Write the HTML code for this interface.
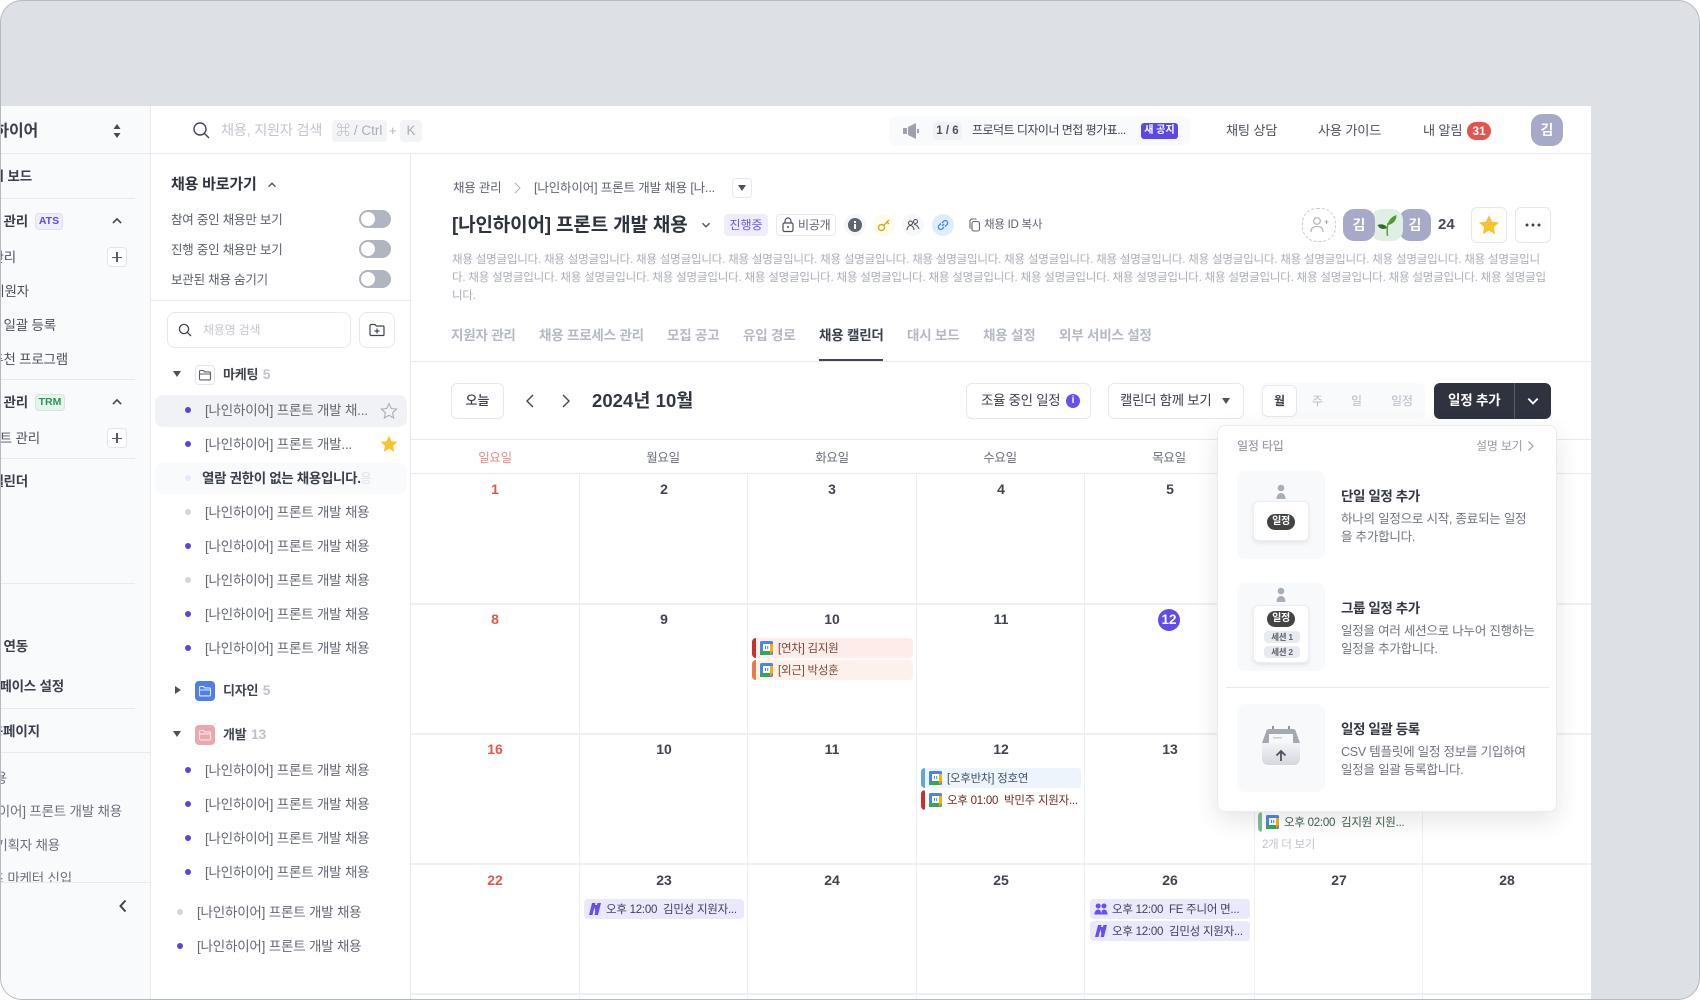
<!DOCTYPE html>
<html lang="ko"><head><meta charset="utf-8"><title>채용 캘린더</title>
<style>
*{box-sizing:border-box}
html,body{margin:0;padding:0;width:1700px;height:1000px;overflow:hidden;background:#fff}
body{font-family:"Liberation Sans","Noto Sans CJK KR",sans-serif;color:#3a3f4b}
#frame{position:absolute;left:0;top:0;width:1700px;height:1000px;background:#dde0e5;border:1px solid #b5b9c2;border-radius:22px;overflow:hidden}
#app{position:absolute;left:-1px;top:105px;width:1591px;height:895px;background:#fff;overflow:hidden}
.a{position:absolute}
.t{position:absolute;white-space:nowrap;line-height:20px;height:20px;letter-spacing:-.2px}
.b{font-weight:700}
.ln{position:absolute;background:#e8eaee}
#side{position:absolute;left:0;top:0;width:151px;height:895px;background:#f9fafc;border-right:1px solid #e8eaee;overflow:hidden;font-size:13.5px;color:#4c515c}
#side .b{color:#3a3f4b}
.plus{position:absolute;left:107px;width:20px;height:20px;background:#fff;border:1px solid #e3e5ea;border-radius:4px}
.plus:before{content:"";position:absolute;left:4px;top:8.5px;width:10px;height:1.5px;background:#565b66}
.plus:after{content:"";position:absolute;left:8.2px;top:4px;width:1.5px;height:10px;background:#565b66}
.badge{position:absolute;font-size:10.5px;font-weight:700;line-height:15px;height:17px;border-radius:4px;text-align:center;border:1px solid}
.tg{position:absolute;left:359px;width:32px;height:18px;border-radius:9px;background:#b1b5c1}
.tg:after{content:"";position:absolute;left:2px;top:2px;width:14px;height:14px;border-radius:50%;background:#fff}
.d{position:absolute;width:6px;height:6px;border-radius:50%;background:#5b42e6}
.g{background:#d3d5da}
.r{font-size:13.5px;color:#636873}
.cnt{color:#bfc3cb;font-size:14px;margin-left:1px}
.kb{position:absolute;background:#f3f4f6;border-radius:4px;height:22px;line-height:22px;font-size:13.5px;color:#a9adb7;text-align:center}
.btn{position:absolute;background:#fff;border:1px solid #e6e8ec;border-radius:6px}
.tab{font-size:13.5px;font-weight:700;color:#b5b9c3;top:220px}
.desc{position:absolute;left:452px;font-size:11.5px;line-height:18px;color:#aaaeb8;white-space:nowrap;letter-spacing:-.2px}
.wd{position:absolute;top:343px;width:60px;text-align:center;font-size:12.5px;color:#6b707b;line-height:20px;letter-spacing:-.3px}
.n{position:absolute;width:40px;text-align:center;font-size:14px;font-weight:700;line-height:20px;color:#3f444f}
.sun{color:#e0574f}
.ev{position:absolute;height:20px;border-radius:4px;font-size:11.5px;line-height:20px;white-space:nowrap;letter-spacing:-.25px;overflow:hidden}
.bar{position:absolute;left:0;top:0;width:4px;height:20px;border-radius:3px 0 0 3px}
.ev svg{position:absolute;left:8px;top:3px}
.ev span{position:absolute;left:26px;top:1px}
#pop{position:absolute;left:1217px;top:320px;width:340px;height:387px;background:#fff;border:1px solid #eaecef;border-radius:8px;box-shadow:0 8px 24px rgba(40,45,60,.12)}
#pin{position:absolute;left:1px;top:0;width:339px;height:386px}
.card{position:absolute;left:18px;width:88px;height:88px;background:#f8f9fb;border-radius:8px}
.wc{position:absolute;left:16px;width:56px;background:#fff;border:1px solid #eceef1;border-radius:6px;box-shadow:0 2px 5px rgba(40,45,60,.1)}
.chip{position:absolute;background:#444;color:#fff;font-size:10px;font-weight:700;border-radius:8px;height:16px;line-height:16px;width:28px;text-align:center;letter-spacing:-.3px}
.ses{position:absolute;background:#e9eaef;color:#5c616c;font-size:8.5px;font-weight:700;border-radius:4px;height:12px;line-height:12px;width:36px;left:10px;text-align:center;letter-spacing:-.3px}
.pt{position:absolute;left:122px;font-size:13.5px;font-weight:700;color:#333742;line-height:20px;white-space:nowrap;letter-spacing:-.4px}
.pd{position:absolute;left:122px;font-size:12.5px;color:#6f747f;line-height:18px;white-space:nowrap;letter-spacing:-.22px}
</style></head><body>
<svg width="0" height="0" style="position:absolute"><defs>
<symbol id="gc" viewBox="0 0 13 14"><rect x="0" y="0" width="13" height="14" rx="1.5" fill="#4a86e8"/><rect x="0" y="10" width="10" height="4" fill="#34a853"/><rect x="10" y="3" width="3" height="7" fill="#f4b400"/><path d="M10 10h3l-3 4z" fill="#e8a30a"/><rect x="3" y="3" width="7" height="7" fill="#fff"/><rect x="5" y="5" width="1" height="3" fill="#4a86e8"/><rect x="7.2" y="5" width="1" height="3" fill="#4a86e8"/></symbol>
<symbol id="st" viewBox="0 0 20 20"><path d="M10 1.8l2.5 5.4 5.9.7-4.4 4 1.2 5.8-5.2-2.9-5.2 2.9 1.2-5.8-4.4-4 5.9-.7z"/></symbol>
<symbol id="nn" viewBox="0 0 14 14"><path d="M4 1h3.5L4.500 13H1zM9.500 1H13l-3 12H6.500zM6 3h3l-1.500 8z" fill="#6a4ff0"/></symbol>
<symbol id="ppl" viewBox="0 0 14 14"><circle cx="4.2" cy="4" r="2.5" fill="#6a4ff0"/><circle cx="10" cy="4" r="2.5" fill="#6a4ff0"/><path d="M.5 12.5c0-3 1.5-5 3.7-5s3 2 3 5zM7.2 12.5c0-3 .8-5 2.8-5s3.6 2 3.6 5z" fill="#6a4ff0"/></symbol>
<symbol id="fol" viewBox="0 0 14 14"><path d="M1.5 3.500a1 1 0 0 1 1-1h3l1 1.400h5a1 1 0 0 1 1 1v6a1 1 0 0 1-1 1h-9a1 1 0 0 1-1-1zM1.500 6h11" fill="none" stroke="currentColor" stroke-width="1.100"/></symbol>
<symbol id="chev" viewBox="0 0 12 12"><path d="M2.500 7.800L6 4.200l3.500 3.600" fill="none" stroke="currentColor" stroke-width="1.400"/></symbol>
</defs></svg>
<div id="frame"><div id="app">

<!-- sidebar -->
<div id="side">
<div class="ln" style="left:0;top:47px;width:150px;height:1px"></div>
<div class="t b" style="right:112px;top:16px;font-size:16px">나인하이어</div>
<svg class="a" style="left:112px;top:15px" width="10" height="20"><path d="M5 3L8.500 8h-7zM5 17l3.500-5h-7z" fill="#444954"/></svg>
<div class="t b" style="right:118px;top:61px">대시 보드</div>
<div class="ln" style="left:0;top:92px;width:135px;height:1px"></div>
<div class="t b" style="right:122px;top:106px">채용 관리</div>
<div class="badge" style="left:35px;top:107px;width:28px;background:#efeefe;border-color:#dfdcfb;color:#5f4de6">ATS</div>
<svg class="a" style="left:110px;top:108px;color:#454a55" width="14" height="14"><use href="#chev"/></svg>
<div class="t" style="right:134px;top:142px">채용 관리</div><div class="plus" style="top:141px"></div>
<div class="t" style="right:121px;top:176px">채용 지원자</div>
<div class="t" style="right:94px;top:210px">지원자 일괄 등록</div>
<div class="t" style="right:82px;top:244px">사내 추천 프로그램</div>
<div class="ln" style="left:0;top:273px;width:135px;height:1px"></div>
<div class="t b" style="right:122px;top:287px">인재 관리</div>
<div class="badge" style="left:35px;top:288px;width:30px;background:#e6f5ec;border-color:#cfe9d9;color:#2f9160">TRM</div>
<svg class="a" style="left:110px;top:289px;color:#454a55" width="14" height="14"><use href="#chev"/></svg>
<div class="t" style="right:110px;top:323px">리스트 관리</div><div class="plus" style="top:322px"></div>
<div class="ln" style="left:0;top:352px;width:135px;height:1px"></div>
<div class="t b" style="right:122px;top:366px">채용 캘린더</div>
<div class="ln" style="left:0;top:477px;width:135px;height:1px"></div>
<div class="t b" style="right:122px;top:531px">외부 연동</div>
<div class="t b" style="right:86px;top:571px">워크스페이스 설정</div>
<div class="ln" style="left:0;top:602px;width:135px;height:1px"></div>
<div class="t b" style="right:110px;top:616px;letter-spacing:-.1px">채용페이지</div>
<div class="ln" style="left:0;top:646px;width:150px;height:1px"></div>
<div class="a" style="left:0;top:647px;width:150px;height:129px;overflow:hidden">
<div class="t" style="right:143px;top:16px;color:#6b707b">최근 채용</div>
<div class="t" style="right:28px;top:49px;color:#6b707b">[나인하이어] 프론트 개발 채용</div>
<div class="t" style="right:90px;top:83px;color:#6b707b">서비스 기획자 채용</div>
<div class="t" style="right:78px;top:116px;color:#6b707b">콘텐츠 마케터 신입</div>
</div>
<div class="ln" style="left:0;top:776px;width:150px;height:1px"></div>
<svg class="a" style="left:117px;top:792px" width="12" height="16"><path d="M8.500 2.500L3.500 8l5 5.500" fill="none" stroke="#3f444f" stroke-width="2"/></svg>
</div>

<!-- shortcuts panel -->
<div class="a" style="left:151px;top:47px;width:260px;height:848px;background:#fff;border-right:1px solid #e8eaee"></div>
<div class="ln" style="left:151px;top:47px;width:1441px;height:1px"></div>
<div class="t b" style="left:171px;top:69px;font-size:15px;color:#30343e">채용 바로가기</div>
<svg class="a" style="left:266px;top:73px;color:#50555f" width="12" height="12"><use href="#chev"/></svg>
<div class="t" style="left:171px;top:104px;font-size:12.5px;color:#5a5f6a">참여 중인 채용만 보기</div><div class="tg" style="top:104px"></div>
<div class="t" style="left:171px;top:134px;font-size:12.5px;color:#5a5f6a">진행 중인 채용만 보기</div><div class="tg" style="top:134px"></div>
<div class="t" style="left:171px;top:164px;font-size:12.5px;color:#5a5f6a">보관된 채용 숨기기</div><div class="tg" style="top:164px"></div>
<div class="ln" style="left:151px;top:194px;width:259px;height:1px"></div>
<div class="btn" style="left:167px;top:206px;width:184px;height:36px;border-radius:8px"></div>
<svg class="a" style="left:178px;top:217px" width="14" height="14"><circle cx="6" cy="6" r="4.600" fill="none" stroke="#3f444f" stroke-width="1.300"/><path d="M9.400 9.400L13 13" stroke="#3f444f" stroke-width="1.300"/></svg>
<div class="t" style="left:203px;top:214px;font-size:12px;color:#c5c8d0">채용명 검색</div>
<div class="btn" style="left:359px;top:206px;width:36px;height:36px;border-radius:8px"></div>
<svg class="a" style="left:369px;top:216px" width="16" height="16"><path d="M1 3.500a1 1 0 0 1 1-1h4l1.300 1.500H14a1 1 0 0 1 1 1v7.500a1 1 0 0 1-1 1H2a1 1 0 0 1-1-1zM8 6.500v5M5.500 9h5" fill="none" stroke="#3f444f" stroke-width="1.200"/></svg>

<svg class="a" style="left:173px;top:265px" width="8" height="6"><path d="M0 0h8L4 6z" fill="#4c515c"/></svg>
<div class="a" style="left:195px;top:259px;width:20px;height:20px;border:1px solid #e3e5ea;border-radius:4px;color:#5c616c"><svg class="a" style="left:2px;top:2px" width="14" height="14"><use href="#fol"/></svg></div>
<div class="t b" style="left:223px;top:258px;font-size:13px;color:#3f444f">마케팅 <span class="cnt">5</span></div>
<div class="a" style="left:155px;top:289px;width:252px;height:32px;background:#f1f2f5;border-radius:8px"></div>
<div class="d" style="left:185px;top:301px"></div><div class="t r" style="left:205px;top:295px">[나인하이어] 프론트 개발 채...</div>
<svg class="a" style="left:380px;top:296px;fill:none;stroke:#a9adb7;stroke-width:1.200" width="18" height="18"><use href="#st"/></svg>
<div class="d" style="left:185px;top:335px"></div><div class="t r" style="left:205px;top:329px">[나인하이어] 프론트 개발...</div>
<svg class="a" style="left:379px;top:328px;fill:#f7c32f" width="20" height="20"><use href="#st"/></svg>
<div class="a" style="left:155px;top:357px;width:252px;height:31px;background:#f9fafb;border-radius:8px"></div>
<div class="d" style="left:185px;top:369px;background:#e9e8f8"></div>
<div class="t" style="left:360px;top:363px;font-size:13px;color:#e3e4e8">용</div>
<div class="t b" style="left:202px;top:363px;font-size:13.5px;letter-spacing:-.34px;color:#3a3f4b">열람 권한이 없는 채용입니다.</div>
<div class="d g" style="left:185px;top:403px"></div><div class="t r" style="left:205px;top:397px">[나인하이어] 프론트 개발 채용</div>
<div class="d" style="left:185px;top:437px"></div><div class="t r" style="left:205px;top:431px">[나인하이어] 프론트 개발 채용</div>
<div class="d g" style="left:185px;top:471px"></div><div class="t r" style="left:205px;top:465px">[나인하이어] 프론트 개발 채용</div>
<div class="d" style="left:185px;top:505px"></div><div class="t r" style="left:205px;top:499px">[나인하이어] 프론트 개발 채용</div>
<div class="d" style="left:185px;top:539px"></div><div class="t r" style="left:205px;top:533px">[나인하이어] 프론트 개발 채용</div>
<svg class="a" style="left:175px;top:580px" width="6" height="8"><path d="M0 0v8l6-4z" fill="#4c515c"/></svg>
<div class="a" style="left:195px;top:575px;width:20px;height:20px;background:#4f7fe6;border-radius:4px;color:#dfe8fb"><svg class="a" style="left:3px;top:3px" width="14" height="14"><use href="#fol"/></svg></div>
<div class="t b" style="left:223px;top:574px;font-size:13px;color:#3f444f">디자인 <span class="cnt">5</span></div>
<svg class="a" style="left:173px;top:625px" width="8" height="6"><path d="M0 0h8L4 6z" fill="#4c515c"/></svg>
<div class="a" style="left:195px;top:619px;width:20px;height:20px;background:#eba7ae;border-radius:4px;color:#fbe7e9"><svg class="a" style="left:3px;top:3px" width="14" height="14"><use href="#fol"/></svg></div>
<div class="t b" style="left:223px;top:618px;font-size:13px;color:#3f444f">개발 <span class="cnt">13</span></div>
<div class="d" style="left:185px;top:661px"></div><div class="t r" style="left:205px;top:655px">[나인하이어] 프론트 개발 채용</div>
<div class="d" style="left:185px;top:695px"></div><div class="t r" style="left:205px;top:689px">[나인하이어] 프론트 개발 채용</div>
<div class="d" style="left:185px;top:729px"></div><div class="t r" style="left:205px;top:723px">[나인하이어] 프론트 개발 채용</div>
<div class="d" style="left:185px;top:763px"></div><div class="t r" style="left:205px;top:757px">[나인하이어] 프론트 개발 채용</div>
<div class="d g" style="left:177px;top:803px"></div><div class="t r" style="left:197px;top:797px">[나인하이어] 프론트 개발 채용</div>
<div class="d" style="left:177px;top:837px"></div><div class="t r" style="left:197px;top:831px">[나인하이어] 프론트 개발 채용</div>

<!-- top bar -->
<svg class="a" style="left:192px;top:15px" width="18" height="18"><circle cx="8" cy="8" r="6" fill="none" stroke="#3f444f" stroke-width="1.400"/><path d="M12.500 12.500L17 17" stroke="#3f444f" stroke-width="1.400"/></svg>
<div class="t" style="left:221px;top:15px;font-size:14.2px;color:#c3c6ce">채용, 지원자 검색</div>
<div class="kb" style="left:332px;top:14px;width:55px">⌘ / Ctrl</div>
<div class="t" style="left:389px;top:15px;font-size:13px;color:#b0b4bd">+</div>
<div class="kb" style="left:400px;top:14px;width:22px">K</div>
<div class="a" style="left:889px;top:10px;width:301px;height:30px;background:#f9fafc;border-radius:8px"></div>
<svg class="a" style="left:903px;top:15px" width="18" height="20"><path d="M0 7h4v6H0zM5 6l8-4v16l-8-4z" fill="#9da1ab"/><rect x="14" y="8" width="2" height="4" fill="#9da1ab"/></svg>
<div class="a" style="left:933px;top:16px;width:29px;height:18px;background:#f1f2f5;border-radius:4px;font-size:11.5px;font-weight:700;line-height:18px;text-align:center;color:#4c515c">1 / 6</div>
<div class="t" style="left:972px;top:14px;font-size:12px;color:#3f444f;letter-spacing:-.52px">프로덕트 디자이너 면접 평가표...</div>
<div class="a" style="left:1141px;top:17px;width:37px;height:16px;background:#5b47ea;border-radius:3px;font-size:10px;font-weight:700;line-height:16px;text-align:center;color:#fff">새 공지</div>
<div class="t" style="left:1226px;top:15px;font-size:13.2px;color:#4c515c">채팅 상담</div>
<div class="t" style="left:1318px;top:15px;font-size:13.2px;color:#4c515c">사용 가이드</div>
<div class="t" style="left:1423px;top:15px;font-size:13.2px;color:#4c515c">내 알림</div>
<div class="a" style="left:1467px;top:16px;width:24px;height:18px;background:#e5534b;border-radius:9px;font-size:12px;font-weight:700;line-height:18px;text-align:center;color:#fff">31</div>
<div class="a" style="left:1531px;top:8px;width:32px;height:32px;background:#a6a9c8;border-radius:11px;font-size:14px;font-weight:700;line-height:32px;text-align:center;color:#fff">김</div>

<!-- heading -->
<div class="t" style="left:453px;top:72px;font-size:12.5px;color:#5f646f">채용 관리</div>
<svg class="a" style="left:513px;top:76px" width="10" height="12"><path d="M2 1l5 5-5 5" fill="none" stroke="#a9adb7" stroke-width="1"/></svg>
<div class="t" style="left:534px;top:72px;font-size:12.5px;letter-spacing:-.14px;color:#5f646f">[나인하이어] 프론트 개발 채용 [나...</div>
<div class="btn" style="left:732px;top:72px;width:20px;height:20px;border-radius:4px"></div>
<svg class="a" style="left:738px;top:79px" width="8" height="6"><path d="M0 0h8L4 6z" fill="#4c515c"/></svg>
<div class="t b" style="left:452px;top:110px;font-size:19px;color:#2f333d;letter-spacing:-.16px">[나인하이어] 프론트 개발 채용</div>
<svg class="a" style="left:700px;top:113px;transform:rotate(180deg);color:#50555f" width="12" height="12"><use href="#chev"/></svg>
<div class="a" style="left:724px;top:108px;width:44px;height:22px;background:#efedfd;border-radius:4px;font-size:12px;line-height:22px;text-align:center;color:#6a5ae8">진행중</div>
<div class="btn" style="left:776px;top:108px;width:60px;height:22px;border-radius:4px"></div>
<svg class="a" style="left:782px;top:111px" width="12" height="16"><path d="M3 6V4a3 3 0 0 1 6 0v2" fill="none" stroke="#4c515c" stroke-width="1.200"/><rect x="1" y="6" width="10" height="8.500" rx="1.500" fill="none" stroke="#4c515c" stroke-width="1.200"/><circle cx="6" cy="10" r="1" fill="#4c515c"/></svg>
<div class="t" style="left:798px;top:109px;font-size:12px;color:#5f646f">비공개</div>
<div class="a" style="left:844px;top:108px;width:22px;height:22px;border-radius:50%;background:#f5f6f8"></div>
<svg class="a" style="left:848px;top:112px" width="14" height="14"><circle cx="7" cy="7" r="7" fill="#60656f"/><rect x="6" y="6" width="2" height="5" fill="#fff"/><rect x="6" y="3" width="2" height="2" fill="#fff"/></svg>
<div class="a" style="left:873px;top:108px;width:22px;height:22px;border-radius:50%;background:#fdfbea"></div>
<svg class="a" style="left:877px;top:112px" width="14" height="14"><circle cx="4.500" cy="9.500" r="3" fill="none" stroke="#d4a62f" stroke-width="1.400"/><path d="M6.800 7.200L12 2M10 4l2 2" fill="none" stroke="#d4a62f" stroke-width="1.400"/></svg>
<div class="a" style="left:902px;top:108px;width:22px;height:22px;border-radius:50%;background:#f6f7f9"></div>
<svg class="a" style="left:906px;top:112px" width="14" height="14"><circle cx="4.500" cy="5" r="2" fill="none" stroke="#4c515c" stroke-width="1.100"/><circle cx="9.500" cy="3.500" r="2" fill="none" stroke="#4c515c" stroke-width="1.100"/><path d="M1 12c.5-3 2-4.500 3.500-4.500S7.500 9 8 12M8 6.500c2 0 4 1.500 5 4.500" fill="none" stroke="#4c515c" stroke-width="1.100"/></svg>
<div class="a" style="left:932px;top:108px;width:22px;height:22px;border-radius:50%;background:#dfedfb"></div>
<svg class="a" style="left:936px;top:112px" width="14" height="14"><path d="M6 8l2-2M5 5.500L3 7.500a2.300 2.300 0 0 0 3.300 3.300l1.700-1.800M9 8.500l2-2A2.300 2.300 0 0 0 7.700 3.200L6 5" fill="none" stroke="#3d8ae0" stroke-width="1.300"/></svg>
<svg class="a" style="left:968px;top:112px" width="13" height="14"><rect x="4" y="3.500" width="7.500" height="9.500" rx="2" fill="none" stroke="#5f646f" stroke-width="1.100"/><path d="M2 10.500V3a2 2 0 0 1 2-2h4.500" fill="none" stroke="#5f646f" stroke-width="1.100"/></svg>
<div class="t" style="left:984px;top:109px;font-size:11.5px;color:#5f646f;letter-spacing:-.25px">채용 ID 복사</div>

<div class="a" style="left:1302px;top:102px;width:34px;height:34px;border:1px dashed #c9ccd3;border-radius:15px"></div>
<svg class="a" style="left:1310px;top:110px" width="20" height="18"><circle cx="7" cy="5" r="3.300" fill="none" stroke="#a9adb7" stroke-width="1.100"/><path d="M1 16c0-4 2.500-5.500 6-5.500s6 1.500 6 5.500M14.500 6h4M16.500 4v4" fill="none" stroke="#a9adb7" stroke-width="1.100"/></svg>
<div class="a" style="left:1399px;top:103px;width:32px;height:32px;background:#a6a9c8;border-radius:11px;font-size:14px;font-weight:700;line-height:32px;text-align:center;color:#fff">김</div>
<div class="a" style="left:1371px;top:103px;width:32px;height:32px;background:#dfefe3;border-radius:11px"></div>
<svg class="a" style="left:1375px;top:107px" width="24" height="24"><path d="M12.500 23c-.5-5-.5-9 .5-13" fill="none" stroke="#5fa13c" stroke-width="1.500"/><path d="M12.500 12C14 6 17 3.500 21.500 2c0 5-3 9.500-9 10z" fill="#4f9a36"/><path d="M12 15C10.500 11.500 7 10.500 2.500 12c2 4 5.500 5 9.500 3z" fill="#2f6b2a"/></svg>
<div class="a" style="left:1343px;top:103px;width:32px;height:32px;background:#a6a9c8;border-radius:11px;font-size:14px;font-weight:700;line-height:32px;text-align:center;color:#fff">김</div>
<div class="t b" style="left:1438px;top:109px;font-size:15px;color:#444954;letter-spacing:0">24</div>
<div class="btn" style="left:1471px;top:101px;width:36px;height:36px"></div>
<svg class="a" style="left:1477px;top:107px;fill:#f7c32f" width="24" height="24"><use href="#st"/></svg>
<div class="btn" style="left:1515px;top:101px;width:36px;height:36px"></div>
<svg class="a" style="left:1524px;top:116px" width="18" height="6"><circle cx="3" cy="3" r="1.500" fill="#3f444f"/><circle cx="9" cy="3" r="1.500" fill="#3f444f"/><circle cx="15" cy="3" r="1.500" fill="#3f444f"/></svg>

<div class="desc" style="top:145px">채용 설명글입니다. 채용 설명글입니다. 채용 설명글입니다. 채용 설명글입니다. 채용 설명글입니다. 채용 설명글입니다. 채용 설명글입니다. 채용 설명글입니다. 채용 설명글입니다. 채용 설명글입니다. 채용 설명글입니다. 채용 설명글입니</div>
<div class="desc" style="top:163px">다. 채용 설명글입니다. 채용 설명글입니다. 채용 설명글입니다. 채용 설명글입니다. 채용 설명글입니다. 채용 설명글입니다. 채용 설명글입니다. 채용 설명글입니다. 채용 설명글입니다. 채용 설명글입니다. 채용 설명글입니다. 채용 설명글입</div>
<div class="desc" style="top:181px">니다.</div>

<div class="t tab" style="left:451px">지원자 관리</div>
<div class="t tab" style="left:539px">채용 프로세스 관리</div>
<div class="t tab" style="left:667px">모집 공고</div>
<div class="t tab" style="left:743px">유입 경로</div>
<div class="t tab" style="left:819px;color:#3a3f4b">채용 캘린더</div>
<div class="t tab" style="left:907px">대시 보드</div>
<div class="t tab" style="left:983px">채용 설정</div>
<div class="t tab" style="left:1059px">외부 서비스 설정</div>
<div class="ln" style="left:411px;top:255px;width:1181px;height:1px"></div>
<div class="a" style="left:819px;top:253px;width:64px;height:2px;background:#3f4450"></div>

<div class="a" style="left:0;top:-1px;width:1591px;height:896px">
<!-- toolbar -->
<div class="btn" style="left:451px;top:278px;width:53px;height:36px;font-size:13px;line-height:34px;text-align:center;font-weight:500;color:#3a3f4b">오늘</div>
<svg class="a" style="left:524px;top:288px" width="12" height="16"><path d="M9 2L3 8l6 6" fill="none" stroke="#3f444f" stroke-width="1.400"/></svg>
<svg class="a" style="left:560px;top:288px" width="12" height="16"><path d="M3 2l6 6-6 6" fill="none" stroke="#3f444f" stroke-width="1.400"/></svg>
<div class="t b" style="left:592px;top:285px;font-size:18.5px;color:#333742;line-height:22px;height:22px;letter-spacing:.05px">2024년 10월</div>
<div class="btn" style="left:966px;top:278px;width:125px;height:36px"></div>
<div class="t" style="left:981px;top:286px;font-size:13.4px;letter-spacing:-.25px;color:#3a3f4b">조율 중인 일정</div>
<div class="a" style="left:1066px;top:289px;width:14px;height:14px;border-radius:50%;background:#6a4ff0;color:#fff;font-size:10px;font-weight:700;line-height:14px;text-align:center">i</div>
<div class="btn" style="left:1108px;top:278px;width:136px;height:36px"></div>
<div class="t" style="left:1120px;top:286px;font-size:13.4px;letter-spacing:-.25px;color:#3a3f4b">캘린더 함께 보기</div>
<svg class="a" style="left:1222px;top:293px" width="8" height="6"><path d="M0 0h8L4 6z" fill="#4c515c"/></svg>
<div class="a" style="left:1260px;top:278px;width:165px;height:36px;background:#f9fafc;border-radius:6px"></div>
<div class="btn" style="left:1262px;top:280px;width:35px;height:32px;font-size:12px;font-weight:700;line-height:30px;text-align:center;color:#3a3f4b">월</div>
<div class="t" style="left:1312px;top:286px;font-size:12px;color:#b5b9c3">주</div>
<div class="t" style="left:1351px;top:286px;font-size:12px;color:#b5b9c3">일</div>
<div class="t" style="left:1391px;top:286px;font-size:12px;color:#b5b9c3">일정</div>
<div class="a" style="left:1434px;top:278px;width:117px;height:36px;background:#2f3340;border-radius:6px"></div>
<div class="a" style="left:1514px;top:278px;width:1px;height:36px;background:#5a5e69"></div>
<div class="t b" style="left:1448px;top:286px;font-size:13.5px;color:#fff">일정 추가</div>
<svg class="a" style="left:1525px;top:288px;transform:rotate(180deg);color:#fff" width="16" height="16"><use href="#chev"/></svg>

<!-- calendar grid -->
<div class="ln" style="left:411px;top:334px;width:1181px;height:1px"></div>
<div class="ln" style="left:411px;top:368px;width:1181px;height:1px"></div>
<div class="ln" style="left:411px;top:498px;width:1181px;height:2px;background:#eef0f3"></div>
<div class="ln" style="left:411px;top:628px;width:1181px;height:2px;background:#eef0f3"></div>
<div class="ln" style="left:411px;top:758px;width:1181px;height:2px;background:#eef0f3"></div>
<div class="ln" style="left:411px;top:888px;width:1181px;height:2px;background:#eef0f3"></div>
<div class="ln" style="left:579px;top:368px;width:1px;height:528px;background:#edeff2"></div>
<div class="ln" style="left:747px;top:368px;width:1px;height:528px;background:#edeff2"></div>
<div class="ln" style="left:916px;top:368px;width:1px;height:528px;background:#edeff2"></div>
<div class="ln" style="left:1084px;top:368px;width:1px;height:528px;background:#edeff2"></div>
<div class="ln" style="left:1254px;top:368px;width:1px;height:528px;background:#edeff2"></div>
<div class="ln" style="left:1422px;top:368px;width:1px;height:528px;background:#edeff2"></div>

<div class="wd" style="left:465px;color:#ec8b84">일요일</div>
<div class="wd" style="left:633px">월요일</div>
<div class="wd" style="left:802px">화요일</div>
<div class="wd" style="left:970px">수요일</div>
<div class="wd" style="left:1139px">목요일</div>

<div class="n sun" style="left:475px;top:374px">1</div><div class="n" style="left:644px;top:374px">2</div><div class="n" style="left:812px;top:374px">3</div><div class="n" style="left:981px;top:374px">4</div><div class="n" style="left:1150px;top:374px">5</div>
<div class="n sun" style="left:475px;top:504px">8</div><div class="n" style="left:644px;top:504px">9</div><div class="n" style="left:812px;top:504px">10</div><div class="n" style="left:981px;top:504px">11</div>
<div class="a" style="left:1158px;top:504px;width:22px;height:22px;border-radius:50%;background:#5f4bf0;color:#fff;font-size:13.5px;font-weight:700;line-height:22px;text-align:center">12</div>
<div class="n sun" style="left:475px;top:634px">16</div><div class="n" style="left:644px;top:634px">10</div><div class="n" style="left:812px;top:634px">11</div><div class="n" style="left:981px;top:634px">12</div><div class="n" style="left:1150px;top:634px">13</div>
<div class="n sun" style="left:475px;top:765px">22</div><div class="n" style="left:644px;top:765px">23</div><div class="n" style="left:812px;top:765px">24</div><div class="n" style="left:981px;top:765px">25</div><div class="n" style="left:1150px;top:765px">26</div><div class="n" style="left:1319px;top:765px">27</div><div class="n" style="left:1487px;top:765px">28</div>

<div class="ev" style="left:752px;top:533px;width:161px;background:#fdecea;color:#7a4540"><i class="bar" style="background:#c9302c"></i><svg width="13" height="14"><use href="#gc"/></svg><span>[연차] 김지원</span></div>
<div class="ev" style="left:752px;top:555px;width:161px;background:#fdf1ec;color:#7a4d3a"><i class="bar" style="background:#e67c47"></i><svg width="13" height="14"><use href="#gc"/></svg><span>[외근] 박성훈</span></div>
<div class="ev" style="left:921px;top:663px;width:160px;background:#edf4fb;color:#3f5266"><i class="bar" style="background:#6aa3d8"></i><svg width="13" height="14"><use href="#gc"/></svg><span>[오후반차] 정호연</span></div>
<div class="ev" style="left:921px;top:685px;width:160px;color:#6e2a25"><i class="bar" style="background:#c9302c;border-radius:2px"></i><svg width="13" height="14"><use href="#gc"/></svg><span>오후 01:00&nbsp; 박민주 지원자...</span></div>

<div class="ev" style="left:584px;top:794px;width:160px;background:#e9e8fd;color:#3f3f58"><svg style="left:4px" width="14" height="14"><use href="#nn"/></svg><span style="left:22px">오후 12:00&nbsp; 김민성 지원자...</span></div>
<div class="ev" style="left:1090px;top:794px;width:160px;background:#e9e8fd;color:#3f3f58"><svg style="left:4px" width="14" height="14"><use href="#ppl"/></svg><span style="left:22px">오후 12:00&nbsp; FE 주니어 면...</span></div>
<div class="ev" style="left:1090px;top:816px;width:160px;background:#e9e8fd;color:#3f3f58"><svg style="left:4px" width="14" height="14"><use href="#nn"/></svg><span style="left:22px">오후 12:00&nbsp; 김민성 지원자...</span></div>
<div class="ev" style="left:1258px;top:707px;width:160px;color:#3e5f48"><i class="bar" style="background:#7fbf8e;border-radius:2px"></i><svg width="13" height="14"><use href="#gc"/></svg><span>오후 02:00&nbsp; 김지원 지원...</span></div>
<div class="t" style="left:1262px;top:730px;font-size:11.5px;color:#c0c3ca;letter-spacing:-.3px">2개 더 보기</div>

<!-- popover -->
<div id="pop"><div id="pin">
<div class="t" style="left:18px;top:10px;font-size:12px;font-weight:500;color:#989da7">일정 타입</div>
<div class="t" style="left:257px;top:10px;font-size:12px;color:#989da7">설명 보기</div>
<svg class="a" style="left:307px;top:14px" width="10" height="12"><path d="M2.500 1.500l4.500 4.500-4.500 4.500" fill="none" stroke="#989da7" stroke-width="1.200"/></svg>

<div class="card" style="top:45px">
<svg class="a" style="left:37px;top:13px" width="14" height="16"><circle cx="7" cy="4" r="3.300" fill="#a9adba"/><path d="M2.500 15c0-4 2-6 4.500-6s4.500 2 4.500 6z" fill="#a9adba"/></svg>
<div class="wc" style="top:30px;height:40px"></div>
<div class="chip" style="left:30px;top:43px">일정</div>
</div>
<div class="pt" style="top:61px">단일 일정 추가</div>
<div class="pd" style="top:84px">하나의 일정으로 시작, 종료되는 일정</div>
<div class="pd" style="top:102px">을 추가합니다.</div>

<div class="card" style="top:157px">
<svg class="a" style="left:37px;top:4px" width="14" height="16"><circle cx="7" cy="4" r="3.300" fill="#a9adba"/><path d="M2.500 15c0-4 2-6 4.500-6s4.500 2 4.500 6z" fill="#a9adba"/></svg>
<div class="wc" style="top:22px;height:58px"><div class="ses" style="top:25px">세션 1</div><div class="ses" style="top:40px">세션 2</div></div>
<div class="chip" style="left:30px;top:28px">일정</div>
</div>
<div class="pt" style="top:173px">그룹 일정 추가</div>
<div class="pd" style="top:196px">일정을 여러 세션으로 나누어 진행하는</div>
<div class="pd" style="top:214px">일정을 추가합니다.</div>

<div class="ln" style="left:7px;top:261px;width:323px;height:1px"></div>

<div class="card" style="top:278px">
<svg class="a" style="left:24px;top:21px" width="40" height="44">
<defs><linearGradient id="lg" x1="0" y1="0" x2="0" y2="1"><stop offset="0" stop-color="#f3f4f7"/><stop offset="1" stop-color="#d4d7de"/></linearGradient></defs>
<path d="M12 1v4M28 1v4" stroke="#6d717c" stroke-width="1.500"/>
<path d="M1 18L5 7a3 3 0 0 1 3-3h24a3 3 0 0 1 3 3l4 11z" fill="#a4a8b3"/>
<rect x="8" y="9" width="24" height="12" fill="#f6f7f9"/><rect x="12" y="12" width="9" height="1.500" fill="#c9ccd3"/>
<path d="M1 18h38v16a6 6 0 0 1-6 6H7a6 6 0 0 1-6-6z" fill="url(#lg)"/>
<path d="M20 36V26M15.500 30.500L20 26l4.500 4.500" fill="none" stroke="#4c515c" stroke-width="1.800"/>
</svg>
</div>
<div class="pt" style="top:294px">일정 일괄 등록</div>
<div class="pd" style="top:317px">CSV 템플릿에 일정 정보를 기입하여</div>
<div class="pd" style="top:335px">일정을 일괄 등록합니다.</div>
</div></div>
</div>

</div></div>
</body></html>
